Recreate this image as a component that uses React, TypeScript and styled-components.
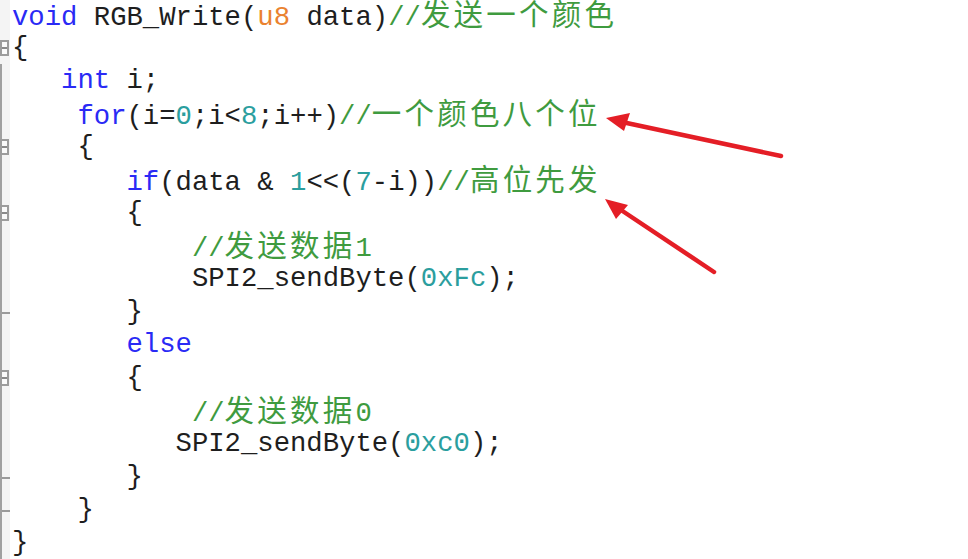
import React from "react";
import styled, { createGlobalStyle } from "styled-components";

const Global = createGlobalStyle`
  html, body { margin: 0; padding: 0; background: #ffffff; }
  body { width: 968px; height: 559px; overflow: hidden; }
`;

const Editor = styled.div`
  position: relative;
  width: 968px;
  height: 559px;
  background: #ffffff;
  display: flex;
  flex-direction: column;
  margin-top: -2px;
`;

const Line = styled.div`
  display: flex;
  align-items: center;
  height: 33px;
`;

const Gutter = styled.div<{ $line: boolean }>`
  position: relative;
  align-self: stretch;
  width: 10px;
  flex: 0 0 10px;
  background: #f4f4f4;
  box-sizing: border-box;
  border-left: 2px solid ${(p) => (p.$line ? "#a0a0a0" : "transparent")};
`;

const FoldBox = styled.span`
  position: absolute;
  left: -2px;
  top: 50%;
  margin-top: -8px;
  width: 9px;
  height: 16px;
  box-sizing: border-box;
  border: 2px solid #9c9c9c;
  border-left: 2px solid #9c9c9c;
  background: #fafafa;
  &::after {
    content: "";
    position: absolute;
    left: 0;
    right: 0;
    top: 5px;
    height: 2px;
    background: #8a8a8a;
  }
`;

const Tick = styled.span`
  position: absolute;
  left: 0;
  top: 50%;
  width: 8px;
  height: 2px;
  background: #9a9a9a;
`;

const Code = styled.div`
  padding-left: 2px;
  white-space: pre;
  font-family: "Liberation Mono", "Courier New", monospace;
  font-size: 27.25px;
  line-height: 33px;
  color: #1e1e1e;
`;

const Kw = styled.span`
  color: #2a2af5;
`;
const Num = styled.span`
  color: #2b9e9e;
`;
const Type = styled.span`
  color: #ea8230;
`;
const Comment = styled.span`
  color: #3f9b3f;
`;
const Cjk = styled.span`
  font-family: "Noto Sans CJK SC", sans-serif;
  font-size: 29.5px;
  letter-spacing: 3.2px;
  color: #3f9b3f;
`;

const Arrows = styled.svg`
  position: absolute;
  left: 0;
  top: 2px;
  pointer-events: none;
`;

type Marker = "box" | "tick" | "none";

const lines: { marker: Marker; guide: boolean; content: React.ReactNode }[] = [
  {
    marker: "none",
    guide: false,
    content: (
      <>
        <Kw>void</Kw> RGB_Write(<Type>u8</Type> data)<Comment>//</Comment>
        <Cjk>发送一个颜色</Cjk>
      </>
    ),
  },
  { marker: "box", guide: false, content: <>{"{"}</> },
  { marker: "none", guide: true, content: <>{"   "}<Kw>int</Kw> i;</> },
  {
    marker: "none",
    guide: true,
    content: (
      <>
        {"    "}
        <Kw>for</Kw>(i=<Num>0</Num>;i&lt;<Num>8</Num>;i++)<Comment>//</Comment>
        <Cjk>一个颜色八个位</Cjk>
      </>
    ),
  },
  { marker: "box", guide: true, content: <>{"    {"}</> },
  {
    marker: "none",
    guide: true,
    content: (
      <>
        {"       "}
        <Kw>if</Kw>(data &amp; <Num>1</Num>&lt;&lt;(<Num>7</Num>-i))<Comment>//</Comment>
        <Cjk>高位先发</Cjk>
      </>
    ),
  },
  { marker: "box", guide: true, content: <>{"       {"}</> },
  {
    marker: "none",
    guide: true,
    content: (
      <>
        {"           "}
        <Comment>//</Comment>
        <Cjk>发送数据</Cjk>
        <Comment>1</Comment>
      </>
    ),
  },
  {
    marker: "none",
    guide: true,
    content: (
      <>
        {"           "}SPI2_sendByte(<Num>0xFc</Num>);
      </>
    ),
  },
  { marker: "tick", guide: true, content: <>{"       }"}</> },
  { marker: "none", guide: true, content: <>{"       "}<Kw>else</Kw></> },
  { marker: "box", guide: true, content: <>{"       {"}</> },
  {
    marker: "none",
    guide: true,
    content: (
      <>
        {"           "}
        <Comment>//</Comment>
        <Cjk>发送数据</Cjk>
        <Comment>0</Comment>
      </>
    ),
  },
  {
    marker: "none",
    guide: true,
    content: (
      <>
        {"          "}SPI2_sendByte(<Num>0xc0</Num>);
      </>
    ),
  },
  { marker: "tick", guide: true, content: <>{"       }"}</> },
  { marker: "tick", guide: true, content: <>{"    }"}</> },
  { marker: "none", guide: true, content: <>{"}"}</> },
];

export default function App() {
  return (
    <>
      <Global />
      <Editor>
        {lines.map((l, i) => (
          <Line key={i}>
            <Gutter $line={l.guide}>
              {l.marker === "box" && <FoldBox />}
              {l.marker === "tick" && <Tick />}
            </Gutter>
            <Code>{l.content}</Code>
          </Line>
        ))}
        <Arrows width="968" height="559" viewBox="0 0 968 559">
          <g stroke="#e41e26" strokeWidth="4.5" strokeLinecap="round" fill="#e41e26">
            <line x1="781" y1="156" x2="622" y2="122" />
            <polygon points="606,118 630,113 624,131" stroke="none" />
            <line x1="714" y1="272" x2="618" y2="208" />
            <polygon points="605,199 628,205 616,219" stroke="none" />
          </g>
        </Arrows>
      </Editor>
    </>
  );
}
